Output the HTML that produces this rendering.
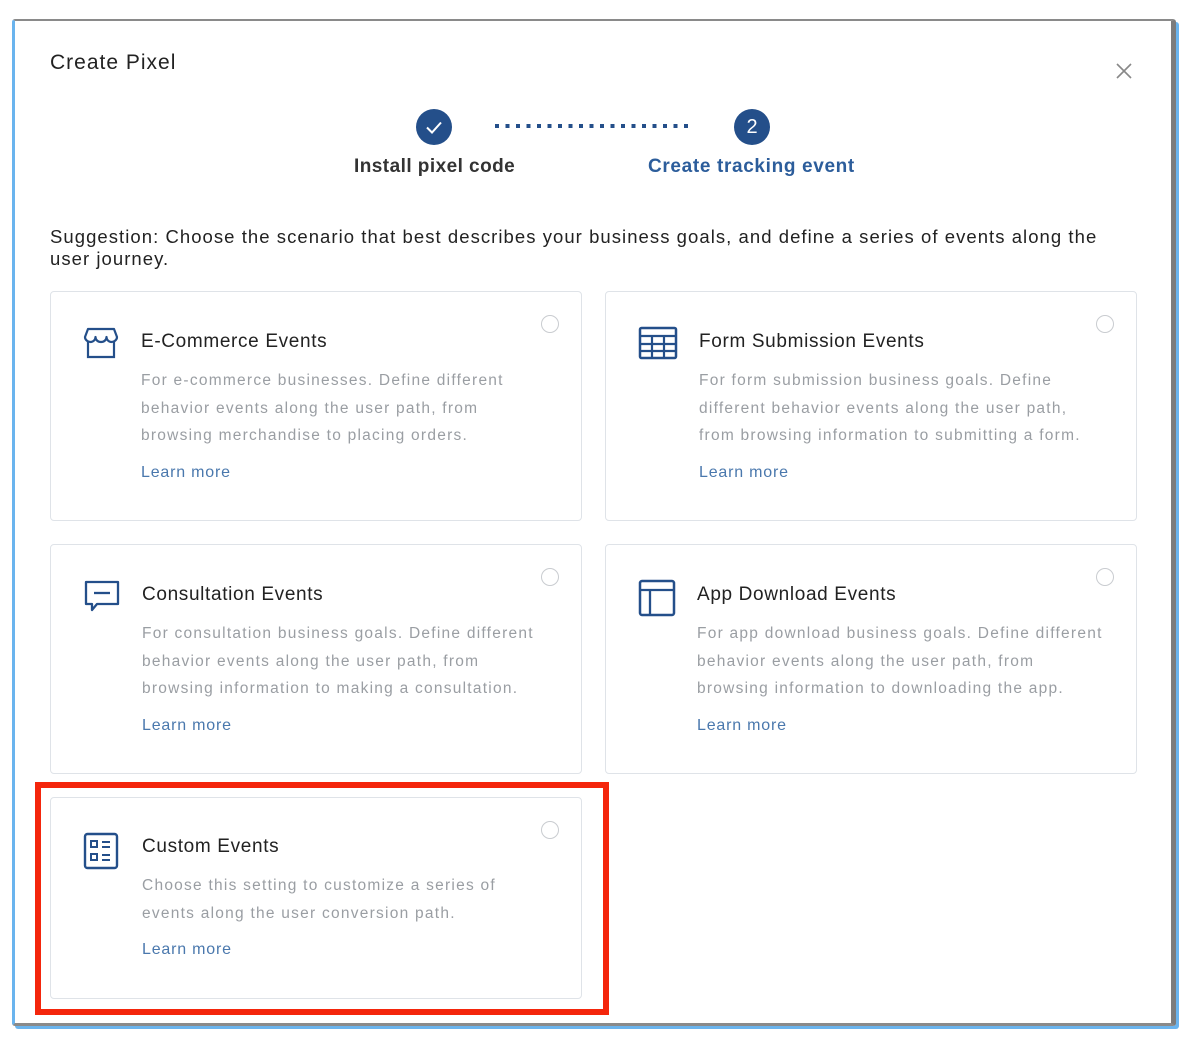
<!DOCTYPE html>
<html><head><style>
body{margin:0;width:1200px;height:1052px;background:#fff;font-family:"Liberation Sans",sans-serif;position:relative;overflow:hidden}
.frame{position:absolute;left:12px;top:19px;width:1156px;height:1002px;border-top:2px solid #8a8a8a;border-left:3px solid #6ab4ee;border-right:5px solid #7c7c7c;border-bottom:3px solid #8a8a8a;border-radius:3px;box-shadow:3px 3px 0 #6ab4ee}
.abs{position:absolute}
.card{position:absolute;width:530px;border:1.5px solid #dfe3e8;border-radius:4px;background:#fff}
.card h3{position:absolute;margin:0;font-weight:normal;font-size:19px;color:#222;letter-spacing:.65px;white-space:nowrap}
.card p{position:absolute;margin:0;font-size:15.5px;color:#9a9ea3;line-height:27.5px;letter-spacing:1.25px;white-space:nowrap}
.card a{position:absolute;font-size:16px;color:#4a78ad;letter-spacing:.8px}
.radio{position:absolute;right:22px;top:23px;width:16px;height:16px;border:1.5px solid #c9ccd0;border-radius:50%}
.ic{position:absolute;left:32px;top:34px}
</style></head><body>
<div class="frame"></div>
<div class="abs" style="left:50px;top:51px;font-size:21px;color:#222;letter-spacing:1px">Create Pixel</div>
<svg class="abs" style="left:1115px;top:62px" width="18" height="18"><path d="M2 2L16 16M16 2L2 16" stroke="#888" stroke-width="1.6"/></svg>
<div class="abs" style="left:416px;top:109px;width:36px;height:36px;border-radius:50%;background:#244f8a"></div>
<svg class="abs" style="left:416px;top:109px" width="36" height="36"><path d="M11 18.5l5 5 9-10" stroke="#fff" stroke-width="2" fill="none"/></svg>
<svg class="abs" style="left:492px;top:122px" width="200" height="8"><line x1="3" y1="4" x2="196" y2="4" stroke="#244f8a" stroke-width="4" stroke-dasharray="4 6.5"/></svg>
<div class="abs" style="left:734px;top:109px;width:36px;height:36px;border-radius:50%;background:#244f8a;color:#fff;font-size:20px;text-align:center;line-height:36px">2</div>
<div class="abs" style="left:354px;top:156px;font-size:19px;color:#333;font-weight:bold;letter-spacing:.45px">Install pixel code</div>
<div class="abs" style="left:648px;top:156px;font-size:19px;color:#2c5d9b;font-weight:bold;letter-spacing:.65px">Create tracking event</div>
<div class="abs" style="left:50px;top:226px;width:1090px;font-size:18.5px;color:#222;line-height:22px;letter-spacing:1.05px">Suggestion: Choose the scenario that best describes your business goals, and define a series of events along the user journey.</div>

<div class="card" style="left:50px;top:291px;height:228px">
<svg class="ic" width="36" height="34" viewBox="0 0 36 34"><path d="M5 3h26l3 8c0 3-3 5-5.5 5s-5-2-5-5c0 3-2.5 5-5.5 5s-5.5-2-5.5-5c0 3-2.5 5-5 5S2 14 2 11z" fill="none" stroke="#244f8a" stroke-width="2.2" stroke-linejoin="round"/><path d="M5 15v16h26V15" fill="none" stroke="#244f8a" stroke-width="2.2"/></svg>
<h3 style="left:90px;top:39px">E-Commerce Events</h3>
<p style="left:90px;top:75px">For e-commerce businesses. Define different<br>behavior events along the user path, from<br>browsing merchandise to placing orders.</p>
<a style="left:90px;top:172px">Learn more</a><div class="radio"></div></div>

<div class="card" style="left:605px;top:291px;height:228px">
<svg class="ic" width="40" height="34" viewBox="0 0 40 34"><rect x="2" y="2" width="36" height="30" rx="1.5" fill="none" stroke="#244f8a" stroke-width="2.5"/><path d="M2 10h36M2 18h36M2 25h36M14 10v22M26 10v22" stroke="#244f8a" stroke-width="2.2"/></svg>
<h3 style="left:93px;top:39px">Form Submission Events</h3>
<p style="left:93px;top:75px">For form submission business goals. Define<br>different behavior events along the user path,<br>from browsing information to submitting a form.</p>
<a style="left:93px;top:172px">Learn more</a><div class="radio"></div></div>

<div class="card" style="left:50px;top:544px;height:228px">
<svg class="ic" width="38" height="36" viewBox="0 0 38 36"><path d="M3 3h32v22H14l-5 6v-6H3z" fill="none" stroke="#244f8a" stroke-width="2.3" stroke-linejoin="round"/><path d="M11 14h16" stroke="#244f8a" stroke-width="2.3"/></svg>
<h3 style="left:91px;top:39px">Consultation Events</h3>
<p style="left:91px;top:75px">For consultation business goals. Define different<br>behavior events along the user path, from<br>browsing information to making a consultation.</p>
<a style="left:91px;top:172px">Learn more</a><div class="radio"></div></div>

<div class="card" style="left:605px;top:544px;height:228px">
<svg class="ic" width="38" height="38" viewBox="0 0 38 38"><rect x="2" y="2" width="34" height="34" rx="2" fill="none" stroke="#244f8a" stroke-width="2.5"/><path d="M2 11h34M12 11v25" stroke="#244f8a" stroke-width="2.3"/></svg>
<h3 style="left:91px;top:39px">App Download Events</h3>
<p style="left:91px;top:75px">For app download business goals. Define different<br>behavior events along the user path, from<br>browsing information to downloading the app.</p>
<a style="left:91px;top:172px">Learn more</a><div class="radio"></div></div>

<div class="card" style="left:50px;top:797px;height:200px">
<svg class="ic" width="36" height="38" viewBox="0 0 36 38"><rect x="2" y="2" width="32" height="34" rx="2.5" fill="none" stroke="#244f8a" stroke-width="2.4"/><rect x="8" y="9" width="6" height="6" fill="none" stroke="#244f8a" stroke-width="2"/><rect x="8" y="22" width="6" height="6" fill="none" stroke="#244f8a" stroke-width="2"/><path d="M19 10h8M19 15h8M19 23h8M19 28h8" stroke="#244f8a" stroke-width="2"/></svg>
<h3 style="left:91px;top:38px">Custom Events</h3>
<p style="left:91px;top:74px">Choose this setting to customize a series of<br>events along the user conversion path.</p>
<a style="left:91px;top:143px">Learn more</a><div class="radio"></div></div>

<div class="abs" style="left:35px;top:782px;width:562px;height:221px;border:6px solid #f4260c"></div>
</body></html>
